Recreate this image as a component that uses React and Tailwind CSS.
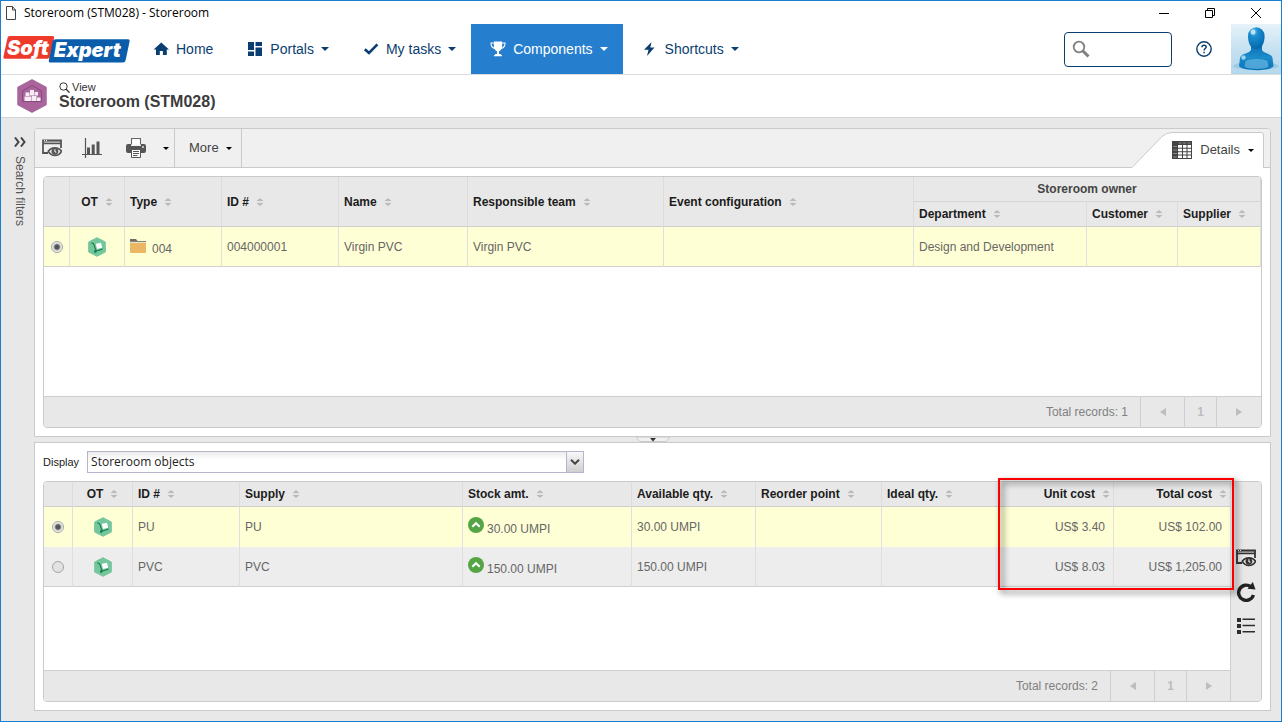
import { useState } from 'react';

const suppliesRows = [
    { id: 'PU', supply: 'PU', stock: '30.00 UMPI', available: '30.00 UMPI', unit: 'US$ 3.40', total: 'US$ 102.00' },
    { id: 'PVC', supply: 'PVC', stock: '150.00 UMPI', available: '150.00 UMPI', unit: 'US$ 8.03', total: 'US$ 1,205.00' },
];

/* ── Icons ── */
const Caret = ({ className = 'w-2 h-1' }) => (
    <svg viewBox="0 0 8 4" className={`shrink-0 ${className}`} fill="currentColor">
        <path d="M0 0h8L4 4z" />
    </svg>
);

const HomeIcon = () => (
    <svg viewBox="0 0 16 14" className="w-4 h-[14px] shrink-0" fill="currentColor">
        <path d="M8.3 0.4 16 7.6h-2.2V13H9.9V8.9H6.8V13H3V7.6H0.6z" />
    </svg>
);

const PortalsIcon = () => (
    <svg viewBox="0 0 16 14" className="w-4 h-[14px] shrink-0" fill="currentColor">
        <path d="M1 0h6v8H1zM8.5 0H15v4H8.5zM1 9.5h6V14H1zM8.5 5.5H15V14H8.5z" />
    </svg>
);

const CheckIcon = () => (
    <svg viewBox="0 0 16 14" className="w-4 h-[14px] shrink-0" fill="none" stroke="currentColor" strokeWidth="2.6">
        <path d="M1.8 7.2 6 11 14.4 2.4" />
    </svg>
);

const TrophyIcon = () => (
    <svg viewBox="0 0 16 16" className="w-4 h-4 shrink-0" fill="currentColor">
        <path d="M4 0.5h8v1h3.6c0 3.6-1.3 6-4.2 6.5-.6 1.2-1.5 2-2.4 2.3v2.7h1.4l1.6 1.5v.8H4v-.8L5.6 13H7v-2.7C6.1 10 5.2 9.2 4.6 8 1.7 7.5.4 5.1.4 1.5H4zM1.5 2.6c.2 2 .9 3.5 2.5 4C3.800 5.500 3.800 4 3.900 2.600zM12.100 2.600c.1 1.400.1 2.900-.1 4 1.600-.5 2.300-2 2.500-4z" />
    </svg>
);

const BoltIcon = () => (
    <svg viewBox="0 0 16 14" className="w-4 h-[14px] shrink-0" fill="currentColor">
        <path d="M9.5 0 2 7.800h4.500L5 14 12.500 5.600H8.300z" />
    </svg>
);

const SortIcon = () => (
    <svg viewBox="0 0 8 8" className="w-2 h-2 shrink-0">
        <path d="M0 3.500 4 0l4 3.500zM0 4.500h8L4 8z" fill="#b9b9b9" />
        <path d="M0 4h8" stroke="#f8f8f8" />
    </svg>
);

const PreviewIcon = ({ color }) => (
    <svg viewBox="0 0 20 18" className="w-5 h-[18px]" fill="none" stroke={color}>
        <path d="M6 14H1V1.500h18V9" strokeWidth="1.800" />
        <path d="M1 4.500h18" strokeWidth="1.400" />
        <path d="M2 1.500h1M4 1.500h1" stroke="#eee" />
        <path d="M2 3h16" stroke={color} strokeOpacity="0.500" />
        <path d="M6.300 12.300c3-4.600 10.300-4.600 13.200 0-2.900 5.400-10.200 5.400-13.200 0z" fill="#eee" strokeWidth="1.700" />
        <circle cx="12.900" cy="12.300" r="3.400" fill={color} stroke="none" />
        <path d="M12.900 10.300v2.200l1.400 1" stroke="#eee" strokeWidth="1.100" />
    </svg>
);

const ChartIcon = () => (
    <svg viewBox="0 0 20 20" className="w-5 h-5">
        <path d="M3.500 0v20M0 16.500h20" stroke="#555" strokeWidth="1.200" />
        <path d="M5 9.500h3V16H5zM9.700 6.500h3V16h-3zM14.500 3.500h3V16h-3z" fill="#555" />
    </svg>
);

const PrinterIcon = () => (
    <svg viewBox="0 0 20 20" className="w-5 h-5">
        <path d="M5.500 6.500v-6h9v6" fill="#fff" stroke="#666" strokeWidth="1.100" />
        <path d="M2 6h3v2h10V6h3q2 0 2 2v5q0 2-2 2H2q-2 0-2-2V8q0-2 2-2z" fill="#555" />
        <circle cx="17" cy="9" r="0.900" fill="#eee" />
        <path d="M5.500 11.500h9v8h-9z" fill="#fff" stroke="#555" />
        <path d="M7 13.500h6M7 15.500h6M7 17.500h4.500" stroke="#555" />
    </svg>
);

const DetailsIcon = () => (
    <svg viewBox="0 0 20 18" className="w-5 h-[18px]">
        <path d="M0 0h20v18H0z" fill="#444" />
        <path d="M6 4h4v2.800H6zM11 4h3.500v2.800H11zM15.500 4h3.500v2.800h-3.500zM6 7.800h4v2.400H6zM11 7.800h3.500v2.400H11zM15.500 7.800h3.500v2.400h-3.500zM6 11.200h4v2.400H6zM11 11.200h3.500v2.400H11zM15.500 11.200h3.500v2.400h-3.500zM6 14.600h4V17H6zM11 14.600h3.500V17H11zM15.500 14.600h3.500V17h-3.500z" fill="#fff" />
        <path d="M1 5.500h4M1 9h4M1 12.500h4M1 16h4M6.500 2h3M11 2h3M15.500 2h3" stroke="#8a8a8a" />
    </svg>
);

const TrolleyIcon = () => (
    <svg viewBox="0 0 18 20" className="w-[18px] h-5 inline-block align-middle">
        <path d="M9 0.700 17.300 5v10L9 19.300 0.700 15V5z" fill="#74c69d" stroke="#74c69d" strokeLinejoin="round" />
        <path d="m7.800 6.700 5.200-1 1.200 5-5.200 1.200z" fill="#fff" />
        <path d="M3.300 5.700 5.500 6.600l2.700 7.400 6.300-1.800" fill="none" stroke="#1f8150" strokeWidth="1.200" />
        <circle cx="7.300" cy="14.500" r="1.400" fill="#1f8150" />
    </svg>
);

const FolderIcon = () => (
    <svg viewBox="0 0 16 16" className="w-4 h-4 shrink-0">
        <path d="M0 2h6l1.500 2H16v1.500H0z" fill="#6e6e66" />
        <path d="M0 6h16v9q0 1-1 1H1q-1 0-1-1z" fill="#ebb765" />
        <path d="M0 5.300h16" stroke="#fffbe0" strokeWidth="0.800" />
    </svg>
);

const UpIcon = () => (
    <svg viewBox="0 0 16 16" className="w-4 h-4 shrink-0">
        <circle cx="8" cy="8" r="8" fill="#55a546" />
        <path d="M4.300 9.700 8 6.200l3.700 3.500" fill="none" stroke="#fff" strokeWidth="2" />
    </svg>
);

const RefreshIcon = () => (
    <svg viewBox="0 0 20 20" className="w-5 h-5">
        <path d="M15 4.800A7.600 7.600 0 1 0 17.500 13" fill="none" stroke="#222" strokeWidth="3.400" />
        <path d="M16.800 0 19.500 7.500 11.500 6.800z" fill="#222" />
    </svg>
);

const ListIcon = () => (
    <svg viewBox="0 0 20 18" className="w-5 h-[18px]" fill="#2d2d2d">
        <path d="M1 1h4v4H1zM1 7h4v4H1zM1 13h4v4H1zM6.500 1.500H19V3H6.500zM6.500 7.800H19v1.500H6.500zM6.500 14H19v1.500H6.500z" />
    </svg>
);

const Logo = () => (
    <svg viewBox="0 0 128 28" className="w-32 h-7 block" role="img" aria-label="SoftExpert">
        <path d="M6.500 1H49.500q2 0 1.600 2L47 21.500q-.5 2.300-2.800 2.300H2Q0 23.800.4 21.800L4.500 3q.4-2 2-2z" fill="#ee3a2b" />
        <path d="M53 4.200h72q2 0 1.600 2L122.700 25q-.5 2.500-2.800 2.500H47q-1.600 0-1.200-2L49.500 7q.5-2.800 3.500-2.800z" fill="#0a5dab" />
        <text x="4" y="20" fill="#fff" fontFamily="Inter, sans-serif" fontWeight="900" fontStyle="italic" fontSize="20">Soft</text>
        <text x="51" y="22" fill="#fff" fontFamily="Inter, sans-serif" fontWeight="900" fontStyle="italic" fontSize="20">Expert</text>
    </svg>
);

const Avatar = () => (
    <svg viewBox="0 0 50 50" className="w-[50px] h-[50px] block">
        <defs>
            <linearGradient id="avatarBg" x1="0" y1="0" x2="0" y2="1">
                <stop offset="0" stopColor="#e6f2f9" />
                <stop offset="0.550" stopColor="#c3e0f0" />
                <stop offset="1" stopColor="#b4d8ed" />
            </linearGradient>
            <radialGradient id="avatarHead" cx="0.350" cy="0.200" r="0.800">
                <stop offset="0" stopColor="#7cc6ec" />
                <stop offset="0.300" stopColor="#1c8fd0" />
                <stop offset="1" stopColor="#0468ac" />
            </radialGradient>
            <linearGradient id="avatarBody" x1="0" y1="0" x2="0" y2="1">
                <stop offset="0" stopColor="#0a6fb2" />
                <stop offset="0.500" stopColor="#1c8ccb" />
                <stop offset="1" stopColor="#0a70b5" />
            </linearGradient>
        </defs>
        <path d="M0 0h50v50H0z" fill="url(#avatarBg)" />
        <ellipse cx="25" cy="42" rx="23" ry="4" fill="#9ccbe6" />
        <path d="M20 21h11v5c2 4 9.500 3 10.500 8l1 8c-3 5.500-31 5.500-34.500 0l1-8c1-5 9-4 11-8z" fill="url(#avatarBody)" />
        <path d="M17 12a8.300 8.800 0 0 1 16.600 0c0 5-1.600 13-8.300 13S17 17 17 12z" fill="url(#avatarHead)" />
        <path d="M14.500 37c4-2.800 18-2.800 22 0l1 6c-5 2.500-19 2.500-24 0z" fill="#66b7e2" opacity="0.700" />
        <circle cx="12.500" cy="33.500" r="2.200" fill="#a6dcf5" opacity="0.900" />
        <ellipse cx="22" cy="8" rx="2.400" ry="2.600" fill="#d5eefa" opacity="0.800" />
    </svg>
);

/* ── Building blocks ── */
const NavItem = ({ icon, label, active, caret = true }) => (
    <a
        href="#"
        className={`flex items-center gap-[7px] pl-[19px] pr-[15px] text-sm ${active ? 'bg-[#267fce] text-white' : 'text-[#0b3e70]'}`}
    >
        {icon}
        <span>{label}</span>
        {caret && <Caret />}
    </a>
);

const HeadCell = ({ children, align = 'left', ...rest }) => (
    <th
        scope="col"
        className={`h-[25px] border-r border-r-[#dcdcdc] border-b border-b-[#cfcfcf] p-0 text-xs font-bold text-[#1c1c1c]
            ${align === 'left' ? 'pl-[5px]' : ''} ${align === 'right' ? 'pr-[3px]' : ''}`}
        {...rest}
    >
        {children && (
            <span
                className={`flex items-center gap-[7px] whitespace-nowrap
                    ${align === 'center' ? 'justify-center' : ''} ${align === 'right' ? 'justify-end' : ''}`}
            >
                {children}
                <SortIcon />
            </span>
        )}
    </th>
);

const Cell = ({ children, align = 'left', last = true }) => (
    <td
        className={`h-10 border-r border-r-[#dfdfdf] p-0 ${last ? 'border-b border-b-[#cfcfcf]' : ''}
            ${align === 'left' ? 'pl-[5px]' : ''} ${align === 'center' ? 'text-center' : ''} ${align === 'right' ? 'pr-2 text-right' : ''}`}
    >
        {children}
    </td>
);

const Radio = ({ label, ...rest }) => (
    <input
        type="radio"
        aria-label={label}
        className="block mx-auto w-3 h-3 appearance-none rounded-full border border-[#a5a5a5] bg-[#e2e2e2] checked:bg-[radial-gradient(circle,#555_0_2px,#ececec_4px)]"
        {...rest}
    />
);

const Pager = ({ total, bordered }) => (
    <div className="flex h-[31px] items-stretch justify-end border-t border-[#cfcfcf] bg-[#e8e8e8] text-xs text-[#808080]">
        <span className="flex items-center pr-3">Total records: {total}</span>
        <button type="button" aria-label="Previous page" className="flex w-11 items-center justify-center border-l border-[#cfcfcf] text-[#bdbdbd]">
            <svg viewBox="0 0 6 8" className="w-[6px] h-2" fill="currentColor"><path d="M6 0v8L0 4z" /></svg>
        </button>
        <button type="button" className="w-8 border-l border-[#cfcfcf] font-bold text-[#bdbdbd]">1</button>
        <button
            type="button"
            aria-label="Next page"
            className={`flex w-[45px] items-center justify-center border-l border-[#cfcfcf] text-[#bdbdbd] ${bordered ? 'border-r' : ''}`}
        >
            <svg viewBox="0 0 6 8" className="w-[6px] h-2" fill="currentColor"><path d="M0 0v8l6-4z" /></svg>
        </button>
    </div>
);

const TitleBar = () => (
    <div className="flex h-[23px] items-center pl-[5px] pr-5 font-['Open_Sans',sans-serif] text-xs text-black">
        <svg viewBox="0 0 10 14" className="w-[10px] h-[14px]" fill="#fff" stroke="#444">
            <path d="M0.500 0.500h6l3 3.500v9.500h-9zM6.500 0.500V4h3" />
        </svg>
        <span className="flex-1 pl-2">Storeroom (STM028) - Storeroom</span>
        <div className="flex items-center gap-9">
            <button type="button" aria-label="Minimize">
                <svg viewBox="0 0 10 10" className="block w-[10px] h-[10px]" stroke="#000"><path d="M0 5.500h10" /></svg>
            </button>
            <button type="button" aria-label="Restore">
                <svg viewBox="0 0 10 10" className="block w-[10px] h-[10px]" stroke="#000" fill="none">
                    <path d="M0.500 2.500h7v7h-7zM2.500 2.500v-2h7v7h-2" />
                </svg>
            </button>
            <button type="button" aria-label="Close">
                <svg viewBox="0 0 10 10" className="block w-[10px] h-[10px]" stroke="#000"><path d="M0 0l10 10M10 0 0 10" /></svg>
            </button>
        </div>
    </div>
);

const Header = () => (
    <header className="flex h-[51px] border-b border-[#dcdcdc] bg-white">
        <div className="flex w-[133px] shrink-0 items-center pl-[2px]">
            <Logo />
        </div>
        <nav className="flex">
            <NavItem icon={<HomeIcon />} label="Home" caret={false} />
            <NavItem icon={<PortalsIcon />} label="Portals" />
            <NavItem icon={<CheckIcon />} label="My tasks" />
            <NavItem icon={<TrophyIcon />} label="Components" active />
            <NavItem icon={<BoltIcon />} label="Shortcuts" />
        </nav>
        <div className="ml-auto flex items-center">
            <div className="relative">
                <input
                    type="search"
                    aria-label="Search"
                    className="block h-[35px] w-[108px] rounded border border-[#0b3e70] bg-white pl-8 text-sm"
                />
                <svg viewBox="0 0 18 18" className="pointer-events-none absolute left-2 top-2 w-[18px] h-[18px]" fill="none" stroke="#808080">
                    <circle cx="7" cy="7" r="5.300" strokeWidth="1.800" />
                    <path d="m11 11 5.500 5.500" strokeWidth="3" />
                </svg>
            </div>
            <button type="button" aria-label="Help" className="ml-6 mr-[19px] text-[#0b3e70]">
                <svg viewBox="0 0 16 16" className="w-4 h-4 block" fill="none" stroke="currentColor">
                    <circle cx="8" cy="8" r="7.200" strokeWidth="1.400" />
                    <path d="M5.900 6.300C5.900 3.500 10.200 3.600 10.200 6 10.200 7.500 8.100 7.600 8.100 9.500M8.100 10.700v1.600" strokeWidth="1.500" />
                </svg>
            </button>
            <Avatar />
        </div>
    </header>
);

const PageHeading = () => (
    <div className="flex h-[43px] items-center border-b border-[#d4d4d4] bg-white pl-4">
        <svg viewBox="0 0 30 34" className="w-[30px] h-[34px] shrink-0">
            <path d="M15 1 29 8.500v17L15 33 1 25.500v-17z" fill="#a9649b" stroke="#a9649b" strokeWidth="1.500" strokeLinejoin="round" />
            <path d="M5.500 22.500V12L15 6.500l9.500 5.500v10.500z" fill="#a9649b" stroke="#874779" />
            <path d="M8.500 13.500h4v3.500h-4zM13 11h4v5.500h-4zM17.500 13h3.500v3.500h-3.500zM7.500 17.500h7V22h-7zM15 17h4.500v5H15zM20 18.500h3.500V22H20z" fill="#f7eef5" />
        </svg>
        <div className="pl-3 pb-[2px]">
            <div className="flex items-center gap-[2px] text-[11px] leading-[13px] text-[#333]">
                <svg viewBox="0 0 11 11" className="w-[11px] h-[11px]" fill="none" stroke="#333">
                    <circle cx="4.500" cy="4.500" r="3.700" />
                    <path d="m7 7 3.500 3.700" strokeWidth="1.300" />
                </svg>
                View
            </div>
            <h1 className="text-base leading-4 font-bold text-[#3c3c3c]">Storeroom (STM028)</h1>
        </div>
    </div>
);

const Toolbar = () => (
    <div className="flex h-[39px] border-b border-[#cacaca] bg-[#f0f0f0] text-[13px] text-[#444]">
        <div className="flex items-center gap-5 border-r border-[#cacaca] pl-[7px] pr-[5px]">
            <button type="button" aria-label="View"><PreviewIcon color="#555" /></button>
            <button type="button" aria-label="Chart"><ChartIcon /></button>
            <button type="button" aria-label="Print" className="flex items-center gap-[17px] pl-1">
                <PrinterIcon />
                <Caret className="w-[6px] h-[3px] text-black" />
            </button>
        </div>
        <button type="button" className="flex items-center gap-[7px] border-r border-[#cacaca] pl-[14px] pr-[9px]">
            More
            <Caret className="w-[6px] h-[3px] text-black" />
        </button>
        <div className="relative ml-auto mr-[6px] -mb-px w-[132px] self-end">
            <svg viewBox="0 0 132 36" className="absolute inset-0 w-full h-full">
                <path d="M0 35.500 30 4.500Q34.500.5 40 .5H129q2.500 0 2.500 2.500V35.500l.5.500H0z" fill="#fff" />
                <path d="M0 35.500 30 4.500Q34.500.5 40 .5H129q2.500 0 2.500 2.500V36" fill="none" stroke="#cacaca" />
            </svg>
            <button type="button" className="relative flex h-9 w-full items-center justify-end gap-2 pr-[10px]">
                <DetailsIcon />
                Details
                <Caret className="w-[6px] h-[3px] text-black" />
            </button>
        </div>
    </div>
);

const StoreroomGrid = () => (
    <div className="m-2 overflow-hidden rounded border border-[#cacaca] bg-white">
        <table className="w-full table-fixed border-separate border-spacing-0 text-xs text-[#666]">
            <colgroup>
                <col className="w-[26px]" />
                <col className="w-[55px]" />
                <col className="w-[97px]" />
                <col className="w-[117px]" />
                <col className="w-[129px]" />
                <col className="w-[196px]" />
                <col />
                <col className="w-[173px]" />
                <col className="w-[91px]" />
                <col className="w-[83px]" />
            </colgroup>
            <thead className="bg-[#e8e8e8]">
                <tr>
                    <HeadCell rowSpan={2} />
                    <HeadCell rowSpan={2} align="center">OT</HeadCell>
                    <HeadCell rowSpan={2}>Type</HeadCell>
                    <HeadCell rowSpan={2}>ID #</HeadCell>
                    <HeadCell rowSpan={2}>Name</HeadCell>
                    <HeadCell rowSpan={2}>Responsible team</HeadCell>
                    <HeadCell rowSpan={2}>Event configuration</HeadCell>
                    <th colSpan={3} scope="colgroup" className="h-[25px] border-r border-b border-[#d6d6d6] p-0 text-center font-bold text-[#444]">
                        Storeroom owner
                    </th>
                </tr>
                <tr>
                    <HeadCell>Department</HeadCell>
                    <HeadCell>Customer</HeadCell>
                    <HeadCell>Supplier</HeadCell>
                </tr>
            </thead>
            <tbody>
                <tr className="bg-[#ffffd5]">
                    <Cell align="center"><Radio label="Select 004000001" name="storeroom" defaultChecked /></Cell>
                    <Cell align="center"><TrolleyIcon /></Cell>
                    <Cell>
                        <span className="flex items-start gap-[6px]"><FolderIcon /><span className="pt-1">004</span></span>
                    </Cell>
                    <Cell>004000001</Cell>
                    <Cell>Virgin PVC</Cell>
                    <Cell>Virgin PVC</Cell>
                    <Cell />
                    <Cell>Design and Development</Cell>
                    <Cell />
                    <Cell />
                </tr>
            </tbody>
        </table>
        <div className="h-[129px]" />
        <Pager total={1} />
    </div>
);

const SuppliesGrid = ({ selected, onSelect }) => (
    <div className="relative flex flex-1">
        <div className="flex flex-1 overflow-hidden rounded border border-[#cacaca] bg-white">
            <div className="flex flex-1 flex-col">
                <table className="w-full table-fixed border-separate border-spacing-0 text-xs text-[#666]">
                    <colgroup>
                        <col className="w-[29px]" />
                        <col className="w-[60px]" />
                        <col className="w-[107px]" />
                        <col />
                        <col className="w-[169px]" />
                        <col className="w-[124px]" />
                        <col className="w-[126px]" />
                        <col className="w-[118px]" />
                        <col className="w-[114px]" />
                        <col className="w-[117px]" />
                    </colgroup>
                    <thead className="bg-[#e8e8e8]">
                        <tr>
                            <HeadCell />
                            <HeadCell align="center">OT</HeadCell>
                            <HeadCell>ID #</HeadCell>
                            <HeadCell>Supply</HeadCell>
                            <HeadCell>Stock amt.</HeadCell>
                            <HeadCell>Available qty.</HeadCell>
                            <HeadCell>Reorder point</HeadCell>
                            <HeadCell>Ideal qty.</HeadCell>
                            <HeadCell align="right">Unit cost</HeadCell>
                            <HeadCell align="right">Total cost</HeadCell>
                        </tr>
                    </thead>
                    <tbody>
                        {suppliesRows.map((row, i) => {
                            const last = i === suppliesRows.length - 1;
                            return (
                                <tr key={row.id} className={selected === row.id ? 'bg-[#ffffd5]' : 'bg-[#ededed]'}>
                                    <Cell last={last} align="center">
                                        <Radio
                                            label={`Select ${row.id}`}
                                            name="supply"
                                            checked={selected === row.id}
                                            onChange={() => onSelect(row.id)}
                                        />
                                    </Cell>
                                    <Cell last={last} align="center"><TrolleyIcon /></Cell>
                                    <Cell last={last}>{row.id}</Cell>
                                    <Cell last={last}>{row.supply}</Cell>
                                    <Cell last={last}>
                                        <span className="flex items-start gap-[3px]"><UpIcon /><span className="pt-1">{row.stock}</span></span>
                                    </Cell>
                                    <Cell last={last}>{row.available}</Cell>
                                    <Cell last={last} />
                                    <Cell last={last} />
                                    <Cell last={last} align="right">{row.unit}</Cell>
                                    <Cell last={last} align="right">{row.total}</Cell>
                                </tr>
                            );
                        })}
                    </tbody>
                </table>
                <div className="min-h-10 flex-1 border-r border-[#cfcfcf]" />
                <Pager total={2} bordered />
            </div>
            <div className="flex w-[30px] shrink-0 flex-col items-center justify-center bg-[#e8e8e8]">
                <button type="button" aria-label="View" className="flex h-[34px] items-center"><PreviewIcon color="#333" /></button>
                <button type="button" aria-label="Refresh" className="flex h-[34px] items-center"><RefreshIcon /></button>
                <button type="button" aria-label="List" className="flex h-[34px] items-center"><ListIcon /></button>
            </div>
        </div>
        {/* Callout around the cost columns */}
        <div className="pointer-events-none absolute -top-[3px] right-7 h-[112px] w-[236px] border-2 border-[#fb0000] drop-shadow-[3px_3px_3px_rgba(0,0,0,0.7)]" />
    </div>
);

const App = () => {
    const [selected, setSelected] = useState('PU');

    return (
        <div className="flex min-h-screen flex-col border border-[#1b7fd0] bg-white font-['Liberation_Sans',Arial,sans-serif]">
            <TitleBar />
            <Header />
            <PageHeading />

            <main className="flex flex-1 bg-[#e8e8e8] pt-[10px] pr-[10px] pb-[10px]">
                {/* ── Collapsed filter strip ── */}
                <button type="button" className="flex w-[33px] shrink-0 flex-col items-center gap-[9px] pt-[9px] pl-[5px] text-xs text-[#555]">
                    <svg viewBox="0 0 12 10" className="w-3 h-[10px]" fill="none" stroke="#444" strokeWidth="2">
                        <path d="M1 0.500 4.500 5 1 9.500M7 0.500 10.500 5 7 9.500" />
                    </svg>
                    <span className="[writing-mode:vertical-rl]">Search filters</span>
                </button>

                <div className="flex min-w-0 flex-1 flex-col">
                    <section className="overflow-hidden rounded-t border border-[#cacaca] bg-white">
                        <Toolbar />
                        <StoreroomGrid />
                    </section>

                    <div className="flex h-[5px] items-center justify-center">
                        <svg viewBox="0 0 34 5" className="w-[34px] h-[5px]">
                            <path d="M0 0h34l-4 4.500H4z" fill="#f0f0f0" stroke="#cacaca" />
                            <path d="M14 1h6l-3 3.500z" fill="#333" />
                        </svg>
                    </div>

                    <section className="flex flex-1 flex-col gap-2 border border-[#cacaca] bg-white p-2">
                        <div className="flex items-center gap-2">
                            <label htmlFor="display" className="text-[11px] text-[#222]">Display</label>
                            <div className="relative w-[497px]">
                                <select
                                    id="display"
                                    className="block h-[22px] w-full appearance-none border border-[#b5b5cb] bg-linear-to-b from-[#ececec] to-white to-40% pl-[3px] font-['Open_Sans',sans-serif] text-xs text-[#222]"
                                >
                                    <option>Storeroom objects</option>
                                </select>
                                <span className="pointer-events-none absolute inset-y-px right-px flex w-[17px] items-center justify-center border-l border-[#b5b5cb] bg-linear-to-b from-[#f8f8f8] to-[#cfcfcf]">
                                    <svg viewBox="0 0 10 6" className="w-[10px] h-[6px]" fill="none" stroke="#444" strokeWidth="2">
                                        <path d="m1 0.700 4 4 4-4" />
                                    </svg>
                                </span>
                            </div>
                        </div>
                        <SuppliesGrid selected={selected} onSelect={setSelected} />
                    </section>
                </div>
            </main>
        </div>
    );
};

export default App;
